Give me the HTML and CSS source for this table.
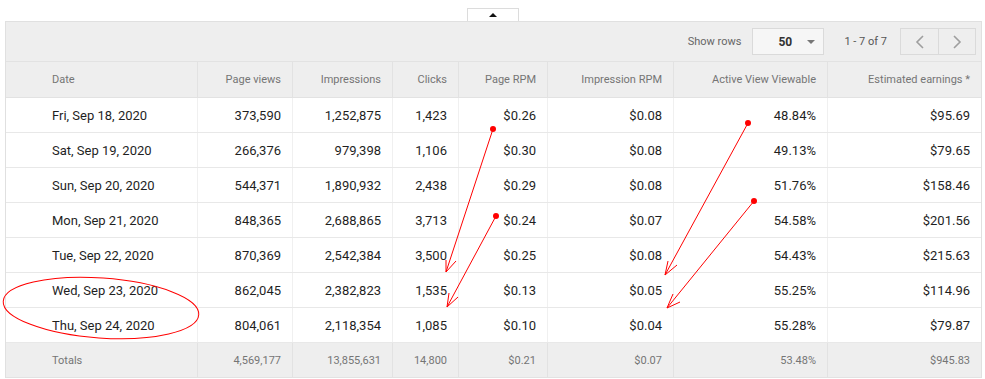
FILE: index.html
```html
<!DOCTYPE html>
<html>
<head>
<meta charset="utf-8">
<link rel="stylesheet" href="styles.css">
</head>
<body>
<div class="page">
  <div class="tab"><span class="tri"></span></div>
  <div class="report">
    <div class="toolbar">
      <span class="label">Show rows</span>
      <div class="select"><span class="val">50</span><span class="caret"></span></div>
      <span class="range">1 - 7 of 7</span>
      <div class="pager">
        <div class="pg"><svg width="10" height="14" viewBox="0 0 10 14"><polyline points="8,1 2,7 8,13" fill="none" stroke="#9e9e9e" stroke-width="1.6"/></svg></div>
        <div class="pg"><svg width="10" height="14" viewBox="0 0 10 14"><polyline points="2,1 8,7 2,13" fill="none" stroke="#9e9e9e" stroke-width="1.6"/></svg></div>
      </div>
    </div>
    <div class="row head">
      <div class="c first">Date</div>
      <div class="c">Page views</div>
      <div class="c">Impressions</div>
      <div class="c">Clicks</div>
      <div class="c">Page RPM</div>
      <div class="c">Impression RPM</div>
      <div class="c">Active View Viewable</div>
      <div class="c">Estimated earnings *</div>
    </div>
    <div class="row">
      <div class="c first">Fri, Sep 18, 2020</div><div class="c">373,590</div><div class="c">1,252,875</div><div class="c">1,423</div><div class="c">$0.26</div><div class="c">$0.08</div><div class="c">48.84%</div><div class="c">$95.69</div>
    </div>
    <div class="row">
      <div class="c first">Sat, Sep 19, 2020</div><div class="c">266,376</div><div class="c">979,398</div><div class="c">1,106</div><div class="c">$0.30</div><div class="c">$0.08</div><div class="c">49.13%</div><div class="c">$79.65</div>
    </div>
    <div class="row">
      <div class="c first">Sun, Sep 20, 2020</div><div class="c">544,371</div><div class="c">1,890,932</div><div class="c">2,438</div><div class="c">$0.29</div><div class="c">$0.08</div><div class="c">51.76%</div><div class="c">$158.46</div>
    </div>
    <div class="row">
      <div class="c first">Mon, Sep 21, 2020</div><div class="c">848,365</div><div class="c">2,688,865</div><div class="c">3,713</div><div class="c">$0.24</div><div class="c">$0.07</div><div class="c">54.58%</div><div class="c">$201.56</div>
    </div>
    <div class="row">
      <div class="c first">Tue, Sep 22, 2020</div><div class="c">870,369</div><div class="c">2,542,384</div><div class="c">3,500</div><div class="c">$0.25</div><div class="c">$0.08</div><div class="c">54.43%</div><div class="c">$215.63</div>
    </div>
    <div class="row">
      <div class="c first">Wed, Sep 23, 2020</div><div class="c">862,045</div><div class="c">2,382,823</div><div class="c">1,535</div><div class="c">$0.13</div><div class="c">$0.05</div><div class="c">55.25%</div><div class="c">$114.96</div>
    </div>
    <div class="row">
      <div class="c first">Thu, Sep 24, 2020</div><div class="c">804,061</div><div class="c">2,118,354</div><div class="c">1,085</div><div class="c">$0.10</div><div class="c">$0.04</div><div class="c">55.28%</div><div class="c">$79.87</div>
    </div>
    <div class="row totals">
      <div class="c first">Totals</div><div class="c">4,569,177</div><div class="c">13,855,631</div><div class="c">14,800</div><div class="c">$0.21</div><div class="c">$0.07</div><div class="c">53.48%</div><div class="c">$945.83</div>
    </div>
  </div>
  <svg class="notes" width="985" height="379" viewBox="0 0 985 379">
    <g fill="none" stroke="#ff0000" stroke-width="1">
      <ellipse cx="101" cy="308" rx="98" ry="30" transform="rotate(4 101 308)"/>
      <line x1="493" y1="129" x2="446" y2="272"/>
      <polyline points="446,260 446,272 456,261"/>
      <line x1="496" y1="216" x2="447" y2="307"/>
      <polyline points="449,293 447,307 458,297"/>
      <line x1="748" y1="123" x2="665" y2="275"/>
      <polyline points="668,261 665,275 677,265"/>
      <line x1="754" y1="201" x2="667" y2="308"/>
      <polyline points="673,294 667,308 680,302"/>
    </g>
    <g fill="#ff0000">
      <circle cx="493" cy="129" r="3"/>
      <circle cx="496" cy="216" r="3"/>
      <circle cx="748" cy="123" r="3"/>
      <circle cx="754" cy="201" r="3"/>
    </g>
  </svg>
</div>
</body>
</html>
```

FILE: styles.css
```css
* { box-sizing: border-box; }
html, body { margin: 0; padding: 0; background: #fff; }
body { font-family: Roboto, "Liberation Sans", Arial, sans-serif; color: #222; }

.page {
  position: relative;
  width: 985px;
  height: 379px;
  padding-top: 8px;
  overflow: hidden;
}

.tab {
  width: 52px;
  height: 13px;
  margin: 0 auto;
  background: #fff;
  border: 1px solid #dcdcdc;
  border-bottom: none;
  display: flex;
  justify-content: center;
  align-items: center;
}
.tri {
  width: 0; height: 0;
  border-left: 4px solid transparent;
  border-right: 4px solid transparent;
  border-bottom: 4px solid #111;
}

.report {
  margin-left: 5px;
  width: 977px;
  border: 1px solid #e0e0e0;
  border-bottom: none;
}

.toolbar {
  height: 40px;
  background: #eeeeee;
  border-bottom: 1px solid #e2e2e2;
  display: flex;
  justify-content: flex-end;
  align-items: center;
  padding-right: 5px;
  font-size: 11px;
  color: #666;
}
.label { margin-right: 11px; }
.select {
  width: 72px;
  height: 27px;
  background: #f6f6f6;
  border: 1px solid #dadada;
  display: flex;
  align-items: center;
  justify-content: space-between;
  padding: 0 8px 0 25px;
}
.val { font-size: 12px; font-weight: 700; color: #333; }
.caret {
  width: 0; height: 0;
  border-left: 4px solid transparent;
  border-right: 4px solid transparent;
  border-top: 4px solid #777;
}
.range { margin: 0 13px 0 20px; font-size: 11px; color: #555; }
.pager {
  display: flex;
  height: 27px;
  border: 1px solid #dadada;
}
.pg {
  width: 37px;
  display: flex;
  align-items: center;
  justify-content: center;
}
.pg + .pg { border-left: 1px solid #dadada; }

.row {
  display: grid;
  grid-template-columns: 191px 95px 100px 66px 89px 126px 154px 154px;
  height: 35px;
  border-bottom: 1px solid #e8e8e8;
  font-size: 13px;
  color: #1f1f1f;
}
.c {
  display: flex;
  align-items: center;
  justify-content: flex-end;
  padding-right: 11px;
  border-left: 1px solid #f0f0f0;
  white-space: nowrap;
}
.c.first {
  justify-content: flex-start;
  padding-left: 46px;
  border-left: none;
}
.head {
  height: 36px;
  background: #eeeeee;
  font-size: 11px;
  color: #757575;
  border-bottom-color: #e2e2e2;
}
.head .c { border-left-color: #e2e2e2; }
.totals {
  background: #eeeeee;
  font-size: 11px;
  color: #757575;
  border-bottom-color: #e2e2e2;
}
.totals .c { border-left-color: #e2e2e2; }

.notes {
  position: absolute;
  left: 0;
  top: 0;
  pointer-events: none;
}
```
